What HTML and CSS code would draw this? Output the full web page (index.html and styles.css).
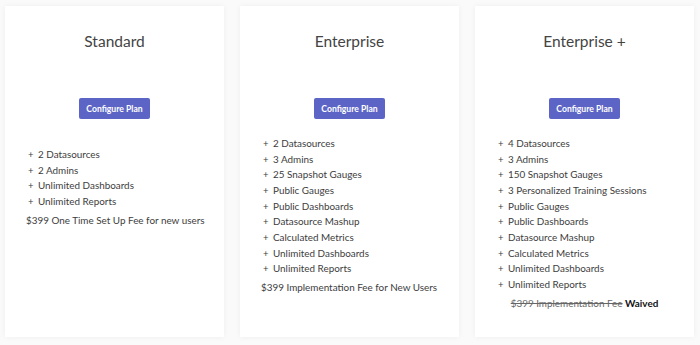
FILE: index.html
```html
<!DOCTYPE html>
<html>
<head>
<meta charset="utf-8">
<link rel="stylesheet" href="styles.css">
</head>
<body>
<div class="plans">
  <div class="card">
    <h2 class="title">Standard</h2>
    <div class="btn-row"><button class="btn">Configure Plan</button></div>
    <ul class="features short">
      <li>2 Datasources</li>
      <li>2 Admins</li>
      <li>Unlimited Dashboards</li>
      <li>Unlimited Reports</li>
    </ul>
    <p class="fee">$399 One Time Set Up Fee for new users</p>
  </div>
  <div class="card">
    <h2 class="title">Enterprise</h2>
    <div class="btn-row"><button class="btn">Configure Plan</button></div>
    <ul class="features">
      <li>2 Datasources</li>
      <li>3 Admins</li>
      <li>25 Snapshot Gauges</li>
      <li>Public Gauges</li>
      <li>Public Dashboards</li>
      <li>Datasource Mashup</li>
      <li>Calculated Metrics</li>
      <li>Unlimited Dashboards</li>
      <li>Unlimited Reports</li>
    </ul>
    <p class="fee">$399 Implementation Fee for New Users</p>
  </div>
  <div class="card">
    <h2 class="title">Enterprise +</h2>
    <div class="btn-row"><button class="btn">Configure Plan</button></div>
    <ul class="features">
      <li>4 Datasources</li>
      <li>3 Admins</li>
      <li>150 Snapshot Gauges</li>
      <li>3 Personalized Training Sessions</li>
      <li>Public Gauges</li>
      <li>Public Dashboards</li>
      <li>Datasource Mashup</li>
      <li>Calculated Metrics</li>
      <li>Unlimited Dashboards</li>
      <li>Unlimited Reports</li>
    </ul>
    <p class="fee center"><s class="old">$399 Implementation Fee</s> <b class="waived">Waived</b></p>
  </div>
</div>
</body>
</html>
```
FILE: styles.css
```css
html, body {
  margin: 0;
  padding: 0;
  background: #fafafa;
}
body {
  width: 700px;
  height: 345px;
  overflow: hidden;
  font-family: Lato, "Open Sans", sans-serif;
  color: #3d3d3d;
}
.plans {
  display: flex;
  gap: 16px;
  padding: 6px 6px 0 5px;
}
.card {
  width: 219px;
  height: 331px;
  box-sizing: border-box;
  background: #fff;
  box-shadow: 0 0 6px rgba(0,0,0,0.05);
  padding: 25px 0 0 21px;
}
.title {
  margin: 0 0 0 -21px;
  text-align: center;
  font-weight: 400;
  font-size: 15.5px;
  line-height: 20px;
  color: #444;
}
.btn-row {
  margin: 47px 0 0 -21px;
  display: flex;
  justify-content: center;
}
.btn {
  width: 71px;
  height: 21px;
  border: 0;
  border-radius: 2px;
  background: #5c65c6;
  color: #fff;
  font-family: Lato, sans-serif;
  font-weight: 700;
  font-size: 8.6px;
  padding: 0;
}
.features {
  list-style: none;
  margin: 17px 0 0 0;
  padding: 0;
  font-size: 9.9px;
  line-height: 15.67px;
}
.features.short {
  margin-top: 28px;
}
.features li {
  display: flex;
}
.features li::before {
  content: "+";
  width: 10px;
  padding-left: 2px;
  flex: none;
  font-size: 9.5px;
}
.fee {
  margin: 3px 0 0 0;
  font-size: 9.9px;
  line-height: 15.67px;
}
.fee.center {
  margin-left: -21px;
  margin-top: 3px;
  text-align: center;
}
.old {
  color: #666;
}
.waived {
  color: #111;
  font-weight: 700;
}
```
